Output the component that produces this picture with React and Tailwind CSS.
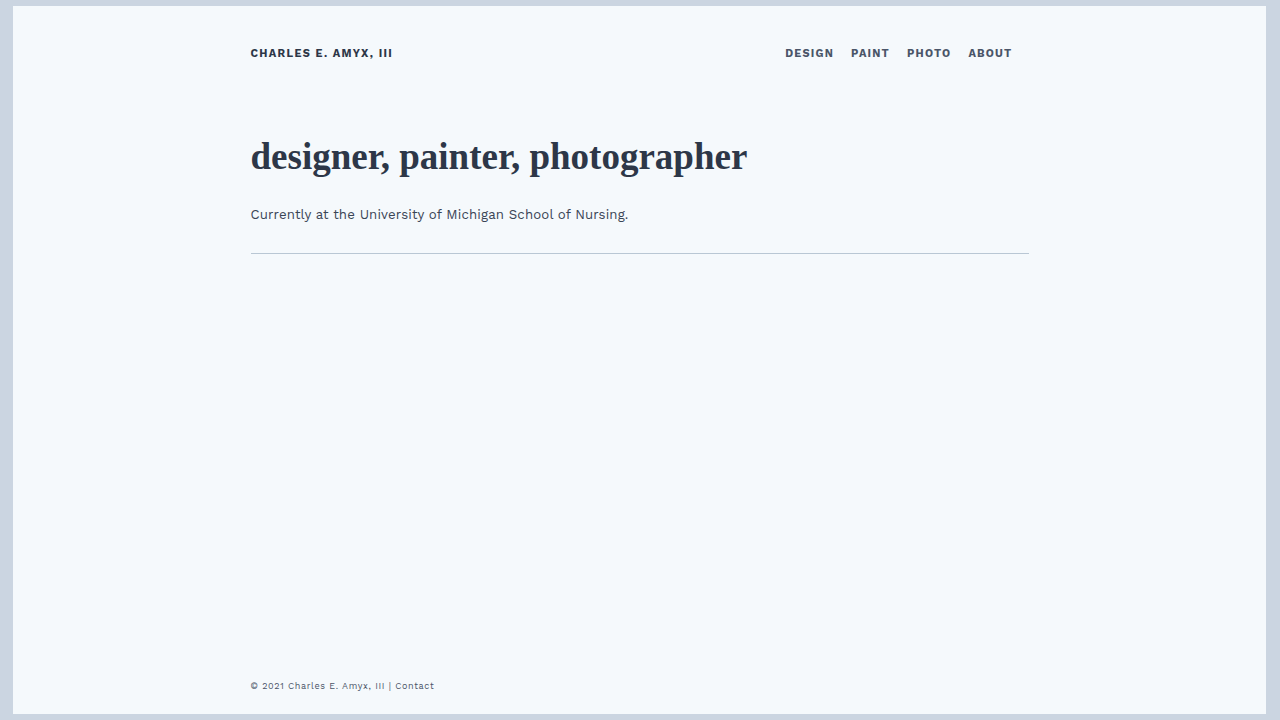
export default function App() {
  return (
    <div className="h-[720px] w-[1280px] bg-[#cbd5e1] pt-[6px] pb-[6px] pl-[13px] pr-[14px]" style={{ fontFamily: '"Work Sans", Inter, "Liberation Sans", sans-serif' }}>
      <div className="flex h-full flex-col bg-[#f5f9fc]">
        <div className="mx-auto flex w-[778px] flex-1 flex-col">
          <header className="flex items-center justify-between pt-[40px]">
            <div className="text-[11px] font-bold tracking-[0.12em] text-[#2d3748]">CHARLES E. AMYX, III</div>
            <nav className="mr-[16px] flex gap-[17px] text-[11px] font-bold tracking-[0.11em] text-[#4a5568]">
              <span>DESIGN</span>
              <span>PAINT</span>
              <span>PHOTO</span>
              <span>ABOUT</span>
            </nav>
          </header>
          <h1 className="mt-[72px] text-[37px] font-bold leading-[1.2] text-[#2d3748]" style={{ fontFamily: '"Liberation Serif", "DejaVu Serif", serif' }}>
            designer, painter, photographer
          </h1>
          <p className="mt-[26px] text-[13.25px] tracking-[0.01em] text-[#3a4556]">
            Currently at the University of Michigan School of Nursing.
          </p>
          <div className="mt-[28px] h-px bg-[#b9c7d4]" />
          <div className="flex-1" />
          <footer className="pb-[21px] text-[9px] tracking-[0.07em] text-[#4a5568]">
            © 2021 Charles E. Amyx, III | Contact
          </footer>
        </div>
      </div>
    </div>
  );
}
